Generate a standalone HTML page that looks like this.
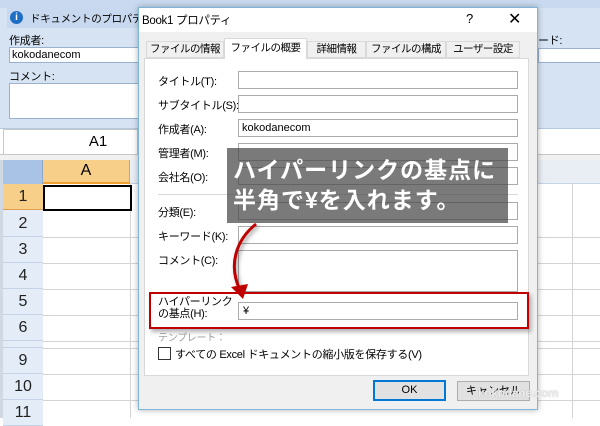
<!DOCTYPE html>
<html><head><meta charset="utf-8"><style>
*{box-sizing:border-box;margin:0;padding:0}
body{width:600px;height:418px;overflow:hidden;position:relative;background:#fff;font-family:"Liberation Sans","Noto Sans CJK JP",sans-serif;font-size:12px;color:#000}
.a{position:absolute}
.inp{position:absolute;background:#fff;border:1px solid #ababab}
.lbl{position:absolute;font-size:11px;white-space:nowrap;letter-spacing:-0.3px}
.rh{position:absolute;left:3px;width:40px;background:#e4ecf7;border-bottom:1px solid #c5d3e5;text-align:center;font-size:16px;color:#222}
.hl{position:absolute;left:43px;right:0;height:1px;background:#d4d4d4}
.vl{position:absolute;top:183px;bottom:0;width:1px;background:#d4d4d4}
.tab{position:absolute;top:41px;height:17px;border:1px solid #d9d9d9;background:#f0f0f0;font-size:10.5px;text-align:center;line-height:15px;white-space:nowrap;letter-spacing:-0.5px;overflow:hidden}
</style></head><body>
<div class="a" style="left:0;top:0;width:600px;height:8px;background:#c9daf0"></div>
<div class="a" style="left:0;top:8px;width:600px;height:120px;background:#d6e3f3"></div>
<div class="a" style="left:7px;top:8px;width:140px;height:20px;background:#c8d9ef"></div>
<div class="a" style="left:10px;top:11px;width:13px;height:13px;border-radius:50%;background:#1e6fc4;color:#fff;font-size:10px;font-weight:bold;text-align:center;line-height:13px">i</div>
<div class="lbl" style="left:30px;top:11px;font-size:10.5px">ドキュメントのプロパティ</div>
<div class="lbl" style="left:9px;top:32px">作成者:</div>
<div class="inp" style="left:9px;top:47px;width:135px;height:16px;border-color:#9bb1cc;font-size:11px;padding-left:2px;line-height:14px">kokodanecom</div>
<div class="lbl" style="left:9px;top:68px">コメント:</div>
<div class="inp" style="left:9px;top:83px;width:135px;height:36px;border-color:#9bb1cc"></div>
<div class="lbl" style="left:538px;top:32px">ード:</div>
<div class="inp" style="left:538px;top:48px;width:70px;height:15px;border-color:#9bb1cc"></div>
<div class="a" style="left:0;top:128px;width:600px;height:27px;background:#fff;border-top:1px solid #b6c8e0;border-bottom:1px solid #c8c8c8"></div>
<div class="a" style="left:3px;top:129px;width:135px;height:26px;border:1px solid #c8c8c8;background:#fff;text-align:center;font-size:15px;line-height:24px;padding-left:55px">A1</div>
<div class="a" style="left:0;top:155px;width:600px;height:5px;background:#f1f1f1"></div>
<div class="a" style="left:0;top:160px;width:600px;height:258px;background:#fff"></div>
<div class="a" style="left:0;top:160px;width:3px;height:258px;background:#d0d8e2"></div>
<div class="a" style="left:3px;top:160px;width:40px;height:24px;background:#a9c3e6;border-right:1px solid #8fa9cc"></div>
<div class="a" style="left:43px;top:160px;width:87px;height:24px;background:#f8cf88;border-right:1px solid #e0a050;border-bottom:2px solid #f0a030;text-align:center;font-size:16px;line-height:22px">A</div>
<div class="a" style="left:130px;top:160px;width:470px;height:24px;background:#e9eef5;border-bottom:1px solid #c5d3e5"></div>
<div class="rh" style="top:184px;height:26px;background:#f8cf88;line-height:26px;border-bottom:1px solid #e0a050">1</div>
<div class="rh" style="top:210px;height:27px;line-height:27px">2</div>
<div class="rh" style="top:237px;height:26px;line-height:26px">3</div>
<div class="rh" style="top:263px;height:26px;line-height:26px">4</div>
<div class="rh" style="top:289px;height:26px;line-height:26px">5</div>
<div class="rh" style="top:315px;height:26px;line-height:26px">6</div>
<div class="rh" style="top:341px;height:7px"></div>
<div class="rh" style="top:348px;height:26px;line-height:26px">9</div>
<div class="rh" style="top:374px;height:26px;line-height:26px">10</div>
<div class="rh" style="top:400px;height:26px;line-height:26px">11</div>
<div class="hl" style="top:237px"></div><div class="hl" style="top:263px"></div><div class="hl" style="top:289px"></div><div class="hl" style="top:315px"></div><div class="hl" style="top:341px"></div><div class="hl" style="top:348px"></div><div class="hl" style="top:374px"></div><div class="hl" style="top:400px"></div>
<div class="vl" style="left:130px"></div><div class="vl" style="left:572px"></div>
<div class="a" style="left:43px;top:185px;width:89px;height:26px;border:2px solid #000"></div>
<div class="a" style="left:138px;top:7px;width:400px;height:403px;background:#f0f0f0;border:1px solid #7fb4d9;box-shadow:0 0 6px rgba(0,0,0,.3)"></div>
<div class="a" style="left:139px;top:8px;width:398px;height:24px;background:#fff"></div>
<div class="lbl" style="left:142px;top:12px;font-size:11.5px">Book1 プロパティ</div>
<div class="lbl" style="left:466px;top:11px;font-size:13px">?</div>
<div class="lbl" style="left:508px;top:9px;font-size:16px">✕</div>
<div class="a" style="left:144px;top:58px;width:385px;height:318px;background:#fff;border:1px solid #d9d9d9"></div>
<div class="tab" style="left:146px;width:78px">ファイルの情報</div>
<div class="tab" style="left:224px;top:38px;height:21px;width:83px;background:#fff;border-bottom:none;line-height:19px">ファイルの概要</div>
<div class="tab" style="left:307px;width:59px">詳細情報</div>
<div class="tab" style="left:366px;width:80px">ファイルの構成</div>
<div class="tab" style="left:446px;width:74px">ユーザー設定</div>
<div class="lbl" style="left:158px;top:73px">タイトル(T):</div><div class="inp" style="left:238px;top:71px;width:280px;height:18px"></div>
<div class="lbl" style="left:158px;top:97px">サブタイトル(S):</div><div class="inp" style="left:238px;top:95px;width:280px;height:18px"></div>
<div class="lbl" style="left:158px;top:121px">作成者(A):</div><div class="inp" style="left:238px;top:119px;width:280px;height:18px;font-size:11px;padding-left:3px;line-height:16px">kokodanecom</div>
<div class="lbl" style="left:158px;top:145px">管理者(M):</div><div class="inp" style="left:238px;top:143px;width:280px;height:18px"></div>
<div class="lbl" style="left:158px;top:169px">会社名(O):</div><div class="inp" style="left:238px;top:167px;width:280px;height:18px"></div>
<div class="a" style="left:158px;top:194px;width:360px;height:1px;background:#d9d9d9"></div>
<div class="lbl" style="left:158px;top:204px">分類(E):</div><div class="inp" style="left:238px;top:202px;width:280px;height:18px"></div>
<div class="lbl" style="left:158px;top:228px">キーワード(K):</div><div class="inp" style="left:238px;top:226px;width:280px;height:18px"></div>
<div class="lbl" style="left:158px;top:252px">コメント(C):</div><div class="inp" style="left:238px;top:250px;width:280px;height:42px"></div>
<div class="lbl" style="left:158px;top:296px;line-height:12px">ハイパーリンク<br>の基点(H):</div><div class="inp" style="left:238px;top:302px;width:280px;height:18px;padding-left:4px;line-height:16px;font-size:11px">¥</div>
<div class="lbl" style="left:158px;top:329px;color:#a0a0a0;font-size:10px">テンプレート：</div>
<div class="a" style="left:158px;top:347px;width:13px;height:13px;border:1px solid #333;background:#fff"></div>
<div class="lbl" style="left:175px;top:346px">すべての Excel ドキュメントの縮小版を保存する(V)</div>
<div class="a" style="left:373px;top:380px;width:73px;height:21px;border:2px solid #0078d7;background:#e1e1e1;text-align:center;line-height:17px;font-size:11px">OK</div>
<div class="a" style="left:457px;top:381px;width:73px;height:20px;border:1px solid #adadad;background:#e1e1e1;text-align:center;line-height:18px;font-size:11px">キャンセル</div>
<div class="lbl" style="left:478px;top:386px;color:rgba(255,255,255,.8);font-size:12px;font-weight:bold;text-shadow:0 0 1px #999">kokodane.com</div>
<div class="a" style="left:149px;top:292px;width:380px;height:37px;border:2px solid #c00000;box-shadow:2px 3px 4px rgba(0,0,0,.3)"></div>
<div class="a" style="left:227px;top:148px;width:281px;height:75px;background:rgba(70,70,70,.72)"></div>
<div class="lbl" style="left:233px;top:155px;font-size:23px;color:#fff;letter-spacing:1px;line-height:30px;font-weight:bold">ハイパーリンクの基点に<br>半角で¥を入れます。</div>
<svg class="a" style="left:0;top:0" width="600" height="418">
<path d="M256 224 C236 240 228 265 240 290" fill="none" stroke="#c00000" stroke-width="3" style="filter:drop-shadow(2px 2px 2px rgba(0,0,0,.4))"/>
<polygon points="231,287 248,284 243,299" fill="#c00000"/>
</svg>
</body></html>
